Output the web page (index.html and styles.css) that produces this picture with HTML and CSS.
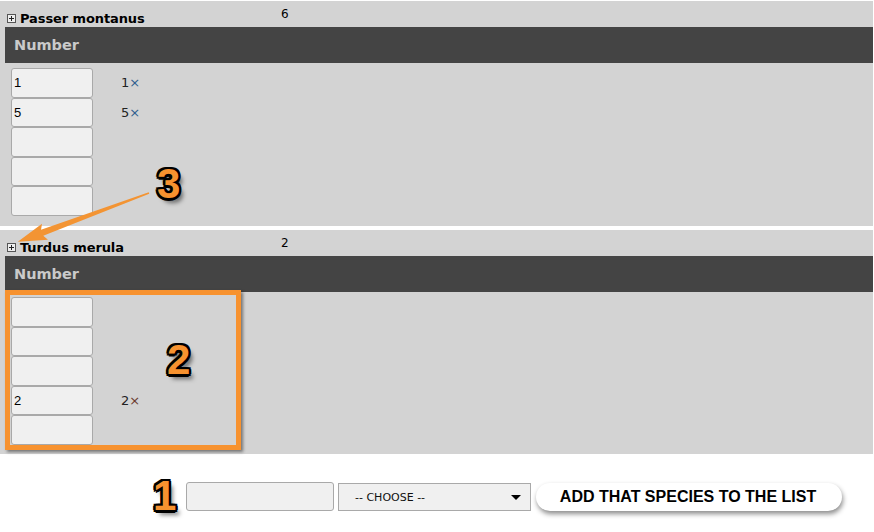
FILE: index.html
```html
<!DOCTYPE html>
<html>
<head>
<meta charset="utf-8">
<link rel="stylesheet" href="styles.css">
</head>
<body>
<div class="page">
  <section class="panel panel-first">
    <div class="title-row">
      <span class="toggle"></span>
      <span class="species">Passer montanus</span>
      <span class="total">6</span>
    </div>
    <div class="bar">Number</div>
    <div class="rows">
      <div class="row"><input class="num" value="1"><span class="count">1<span class="x">×</span></span></div>
      <div class="row"><input class="num" value="5"><span class="count">5<span class="x">×</span></span></div>
      <div class="row"><input class="num" value=""></div>
      <div class="row"><input class="num" value=""></div>
      <div class="row"><input class="num" value=""></div>
    </div>
  </section>
  <section class="panel panel-second">
    <div class="title-row">
      <span class="toggle"></span>
      <span class="species">Turdus merula</span>
      <span class="total">2</span>
    </div>
    <div class="bar">Number</div>
    <div class="rows">
      <div class="row"><input class="num" value=""></div>
      <div class="row"><input class="num" value=""></div>
      <div class="row"><input class="num" value=""></div>
      <div class="row"><input class="num" value="2"><span class="count">2<span class="x x-red">×</span></span></div>
      <div class="row"><input class="num" value=""></div>
    </div>
  </section>
  <div class="add-row">
    <input class="species-input" value="">
    <div class="choose"><span>-- CHOOSE --</span><span class="caret"></span></div>
    <button class="add-btn">ADD THAT SPECIES TO THE LIST</button>
  </div>

  <div class="hl-box"></div>
  <span class="badge badge-1">1</span>
  <span class="badge badge-2">2</span>
  <span class="badge badge-3">3</span>
  <svg class="arrow" width="874" height="532" viewBox="0 0 874 532">
    <g transform="translate(149 193) rotate(159.6)">
      <polygon points="0,-0.7 114,-3.2 111,-8.5 140,0 111,8.5 114,3.2 0,0.7" fill="#f39433"/>
    </g>
  </svg>
</div>
</body>
</html>
```
FILE: styles.css
```css
* { box-sizing: border-box; }
html, body { margin: 0; padding: 0; background: #fff; }
body {
  font-family: "DejaVu Sans", Verdana, sans-serif;
  color: #000;
}
.page {
  position: relative;
  width: 874px;
  height: 532px;
  padding-top: 1px;
}
.panel {
  background: #d3d3d3;
  width: 873px;
  padding-left: 5px;
}
.panel-first { height: 225px; }
.panel-second { height: 224px; margin-top: 4px; }
.title-row {
  height: 26px;
  display: flex;
  align-items: flex-start;
  position: relative;
}
.toggle {
  width: 9px;
  height: 9px;
  margin-top: 13px;
  margin-left: 2px;
  border: 1px solid #555;
  background: #eee linear-gradient(#222, #222) center / 5px 1px no-repeat;
  position: relative;
}
.toggle::after {
  content: "";
  position: absolute;
  left: 3px;
  top: 1px;
  width: 1px;
  height: 5px;
  background: #222;
}
.species {
  margin-left: 4px;
  margin-top: 10px;
  font-weight: bold;
  font-size: 13px;
  line-height: 15px;
  letter-spacing: -0.1px;
}
.total {
  position: absolute;
  left: 276px;
  top: 6px;
  font-size: 12px;
  line-height: 14px;
}
.bar {
  height: 36px;
  background: #444;
  color: #cacaca;
  font-weight: bold;
  font-size: 14.5px;
  line-height: 36px;
  padding-left: 9px;
}
.rows {
  padding-left: 6px;
  padding-top: 5px;
}
.row {
  height: 29.6px;
  display: flex;
  align-items: center;
}
.num {
  width: 82px;
  height: 29.6px;
  margin: 0;
  border: 1px solid #a9a9a9;
  border-radius: 3px;
  background: #f0f0f0;
  padding: 0 0 0 2px;
  font-family: "Liberation Sans", Arial, sans-serif;
  font-size: 13px;
  color: #000;
  outline: none;
}
.count {
  margin-left: 28px;
  font-size: 13px;
  color: #222;
}
.x { color: #2f5f8f; }
.x-red { color: #6a3a30; }

.add-row {
  display: flex;
  align-items: center;
  gap: 4px;
  padding-left: 186px;
  margin-top: 27px;
}
.species-input {
  width: 148px;
  height: 29px;
  margin: 0;
  border: 1px solid #a9a9a9;
  border-radius: 3px;
  background: #f0f0f0;
  outline: none;
}
.choose {
  width: 193px;
  height: 28px;
  margin-top: 2px;
  border: 1px solid #a9a9a9;
  background: #f0f0f0;
  display: flex;
  align-items: center;
  justify-content: space-between;
  padding: 0 9px 0 16px;
  font-size: 11px;
  color: #111;
}
.caret {
  width: 0;
  height: 0;
  border-left: 5px solid transparent;
  border-right: 5px solid transparent;
  border-top: 5px solid #000;
}
.add-btn {
  width: 306px;
  height: 28px;
  margin: 2px 0 0 1px;
  border: 0;
  border-radius: 14px;
  background: #fff;
  box-shadow: 1px 3px 5px rgba(0,0,0,0.45);
  font-family: "Liberation Sans", Arial, sans-serif;
  font-weight: bold;
  font-size: 16px;
  color: #000;
  padding: 0 2px 0 0;
}

.hl-box {
  position: absolute;
  left: 5px;
  top: 290px;
  width: 236px;
  height: 160px;
  border: 5px solid #f7922f;
  box-shadow: 2px 2px 3px rgba(0,0,0,0.45);
}
.badge {
  position: absolute;
  font-family: "Liberation Sans", Arial, sans-serif;
  font-weight: bold;
  font-size: 42px;
  line-height: 42px;
  color: #f7922f;
  text-shadow:
    -2.5px 0 0 #000, 2.5px 0 0 #000, 0 -2.5px 0 #000, 0 2.5px 0 #000,
    -2px -2px 0 #000, 2px -2px 0 #000, -2px 2px 0 #000, 2px 2px 0 #000,
    4px 5px 4px rgba(0,0,0,0.5);
}
.badge-1 { left: 153px; top: 475px; }
.badge-2 { left: 167px; top: 339px; }
.badge-3 { left: 157px; top: 163px; }
.arrow {
  position: absolute;
  left: 0;
  top: 0;
  pointer-events: none;
}
```
